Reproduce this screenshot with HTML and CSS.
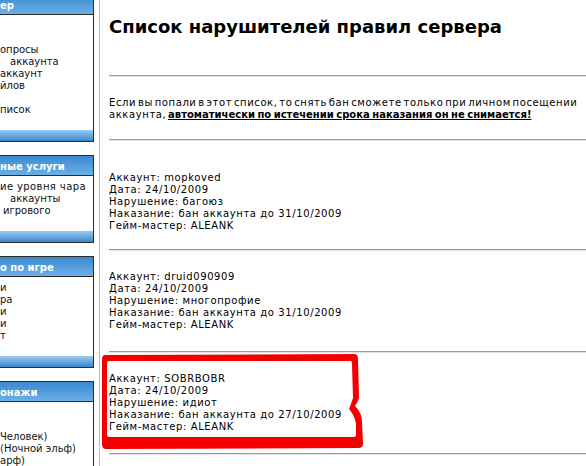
FILE: index.html
```html
<!DOCTYPE html>
<html>
  <head>
    <meta charset="utf-8" />
    <title>Список нарушителей правил сервера</title>
    <meta name="viewport" content="width=device-width, initial-scale=1" />
    <link rel="stylesheet" href="styles.css">
  </head>
  <body>
    <div class="page">
      <div class="sidebar">
        <div class="box">
          <div class="box-head">ер</div>
          <div class="box-body">
            <a>&nbsp;</a>
            <a>&nbsp;</a>
            <a>опросы</a>
            <a class="shift-10">аккаунта</a>
            <a>аккаунт</a>
            <a>йлов</a>
            <a>&nbsp;</a>
            <a>писок</a>
          </div>
          <div class="box-foot"></div>
        </div>
        <div class="box">
          <div class="box-head">ные услуги</div>
          <div class="box-body">
            <a class="wide">ие уровня чара</a>
            <a class="shift-10">аккаунты</a>
            <a class="shift-3">игрового</a>
          </div>
          <div class="box-foot"></div>
        </div>
        <div class="box">
          <div class="box-head">о по игре</div>
          <div class="box-body">
            <a>и</a>
            <a>ра</a>
            <a>и</a>
            <a>и</a>
            <a>т</a>
          </div>
          <div class="box-foot"></div>
        </div>
        <div class="box">
          <div class="box-head">онажи</div>
          <div class="box-body">
            <a>&nbsp;</a>
            <a>&nbsp;</a>
            <a>Человек)</a>
            <a>(Ночной эльф)</a>
            <a>арф)</a>
          </div>
        </div>
      </div>

      <div class="content">
        <h1>Список нарушителей правил сервера</h1>
        <hr>
        <p class="intro">
          Если вы попали в этот список, то снять бан сможете только при личном посещении<br>
          аккаунта, <a href="#">автоматически по истечении срока наказания он не снимается!</a>
        </p>
        <hr>
        <div class="record first">
          Аккаунт: mopkoved<br>
          Дата: 24/10/2009<br>
          Нарушение: багоюз<br>
          Наказание: бан аккаунта до 31/10/2009<br>
          Гейм-мастер: ALEANK
        </div>
        <hr>
        <div class="record">
          Аккаунт: druid090909<br>
          Дата: 24/10/2009<br>
          Нарушение: многопрофие<br>
          Наказание: бан аккаунта до 31/10/2009<br>
          Гейм-мастер: ALEANK
        </div>
        <hr>
        <div class="record marked">
          Аккаунт: SOBRBOBR<br>
          Дата: 24/10/2009<br>
          Нарушение: идиот<br>
          Наказание: бан аккаунта до 27/10/2009<br>
          Гейм-мастер: ALEANK
          <!-- hand drawn marker over the record -->
          <svg class="marker" width="270" height="100" viewBox="0 0 270 100">
            <path fill="#f20000" fill-rule="evenodd"
              d="M5 3 L254 2 Q258 2 258 7 L259 46 Q258 50 255 54 Q262 61 262 70 L263 92 Q263 96 258 96 L6 97 Q2 97 2 92 L2 8 Q2 3 5 3 Z
                 M9 9 L251 9 Q252 9 252 12 L253 46 Q251 52 249 57 Q255 64 256 72 L256 83 Q256 85 254 85 L9 85 Q7 85 7 83 L7 11 Q7 9 9 9 Z" />
          </svg>
        </div>
        <hr>
      </div>
    </div>
  </body>
</html>
```

FILE: styles.css
```css
body {
  margin: 0;
  font-family: "DejaVu Sans", Verdana, sans-serif;
  font-size: 10px;
  color: #000;
  background: #fff;
  overflow: hidden;
}
.page {
  display: flex;
  width: 586px;
  height: 466px;
  overflow: hidden;
}

/* left menu, page is scrolled so only the right part shows */
.sidebar {
  width: 94px;
  flex: none;
  margin-top: -6px;
}
.box {
  border: 1px solid #2c2c2c;
  border-left: none;
  margin-bottom: 13px;
}
.box-head {
  height: 19px;
  line-height: 22px;
  color: #fff;
  font-weight: bold;
  white-space: nowrap;
  overflow: hidden;
  background: linear-gradient(#3b89cf, #6cafe7);
}
.box-body {
  padding: 5px 0 14px;
  border-top: 1px solid #2c2c2c;
}
.box-body a {
  display: block;
  height: 12px;
  line-height: 12px;
  color: #111;
  white-space: nowrap;
}
.box-body a.wide {
  letter-spacing: 0.4px;
}
.box-foot {
  height: 11px;
  background: linear-gradient(#9ccbf0, #3a86cc);
}
.shift-10 {
  padding-left: 10px;
}
.shift-3 {
  padding-left: 3px;
}

/* main column */
.content {
  flex: 1;
  min-width: 0;
  margin-left: 5px;
  border-left: 1px solid #9dc2e2;
  padding-left: 9px;
}
h1 {
  font-size: 18px;
  line-height: 22px;
  margin: 0 0 37px;
  padding-top: 16px;
  white-space: nowrap;
}
hr {
  height: 0;
  margin: 0;
  border: none;
  border-top: 1px solid #9a9a9a;
  border-bottom: 1px solid #e4e4e4;
}
.intro {
  margin: 20px 0 18px;
  line-height: 12px;
  letter-spacing: 0.6px;
  word-spacing: -2px;
  white-space: nowrap;
}
.intro a {
  color: #000;
  font-weight: bold;
  letter-spacing: 0;
  word-spacing: -1px;
  text-decoration: underline;
}
.record {
  padding: 20px 0;
  line-height: 12px;
  letter-spacing: 0.6px;
  white-space: nowrap;
}
.record.first {
  padding: 31px 0 17px;
}
.marked {
  position: relative;
}
.marker {
  position: absolute;
  left: -9px;
  top: -1px;
}
```
